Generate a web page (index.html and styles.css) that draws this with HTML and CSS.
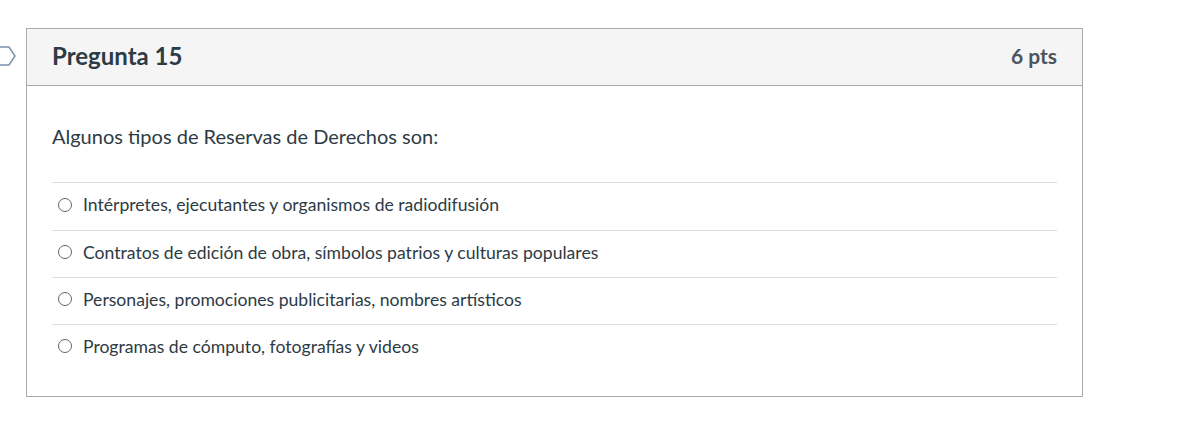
FILE: index.html
```html
<!DOCTYPE html>
<html lang="es">
<head>
<meta charset="utf-8">
<link rel="stylesheet" href="styles.css">
</head>
<body>
<div class="page">
  <svg class="flag" width="20" height="22" viewBox="0 0 20 22"><path d="M-6 2 H9 L15 11 L9 20 H-6 Z" fill="none" stroke="#7a93ad" stroke-width="1.5"/></svg>
  <div class="card">
    <div class="header">
      <span class="title">Pregunta 15</span>
      <span class="pts">6 pts</span>
    </div>
    <div class="body">
      <p class="qtext">Algunos tipos de Reservas de Derechos son:</p>
      <div class="answers">
        <label class="answer"><span class="radio"></span>Intérpretes, ejecutantes y organismos de radiodifusión</label>
        <label class="answer"><span class="radio"></span>Contratos de edición de obra, símbolos patrios y culturas populares</label>
        <label class="answer"><span class="radio"></span>Personajes, promociones publicitarias, nombres artísticos</label>
        <label class="answer"><span class="radio"></span>Programas de cómputo, fotografías y videos</label>
      </div>
    </div>
  </div>
</div>
</body>
</html>
```
FILE: styles.css
```css
html, body { margin: 0; padding: 0; background: #fff; }
body { font-family: Lato, "Open Sans", sans-serif; color: #2d3b45; }
.page { position: relative; padding: 28px 0 0 26px; width: 1057px; }
.flag { position: absolute; left: 0; top: 45px; }
.card { border: 1px solid #aaa; }
.header {
  display: flex; justify-content: space-between; align-items: center;
  height: 56px; padding: 0 25px 0 25px; background: #f5f5f5;
  border-bottom: 1px solid #aaa;
}
.title { font-size: 24px; font-weight: 700; color: #2d3b45; margin-top: -4px; }
.pts { font-size: 21px; font-weight: 700; color: #4a5560; margin-top: -4px; }
.body { padding: 36px 25px 25px 25px; }
.qtext { margin: 0 0 31px 0; font-size: 20px; line-height: 29px; }
.answer {
  display: flex; align-items: center; height: 47px; box-sizing: border-box;
  padding-bottom: 4px;
  border-top: 1px solid #ddd; font-size: 17.6px; color: #2d3b45;
}
.answer:first-child { height: 48px; }
.radio {
  width: 14px; height: 14px; border: 1px solid #666; border-radius: 50%;
  margin: 0 11px 0 6px; box-sizing: border-box; flex: none;
}
```
